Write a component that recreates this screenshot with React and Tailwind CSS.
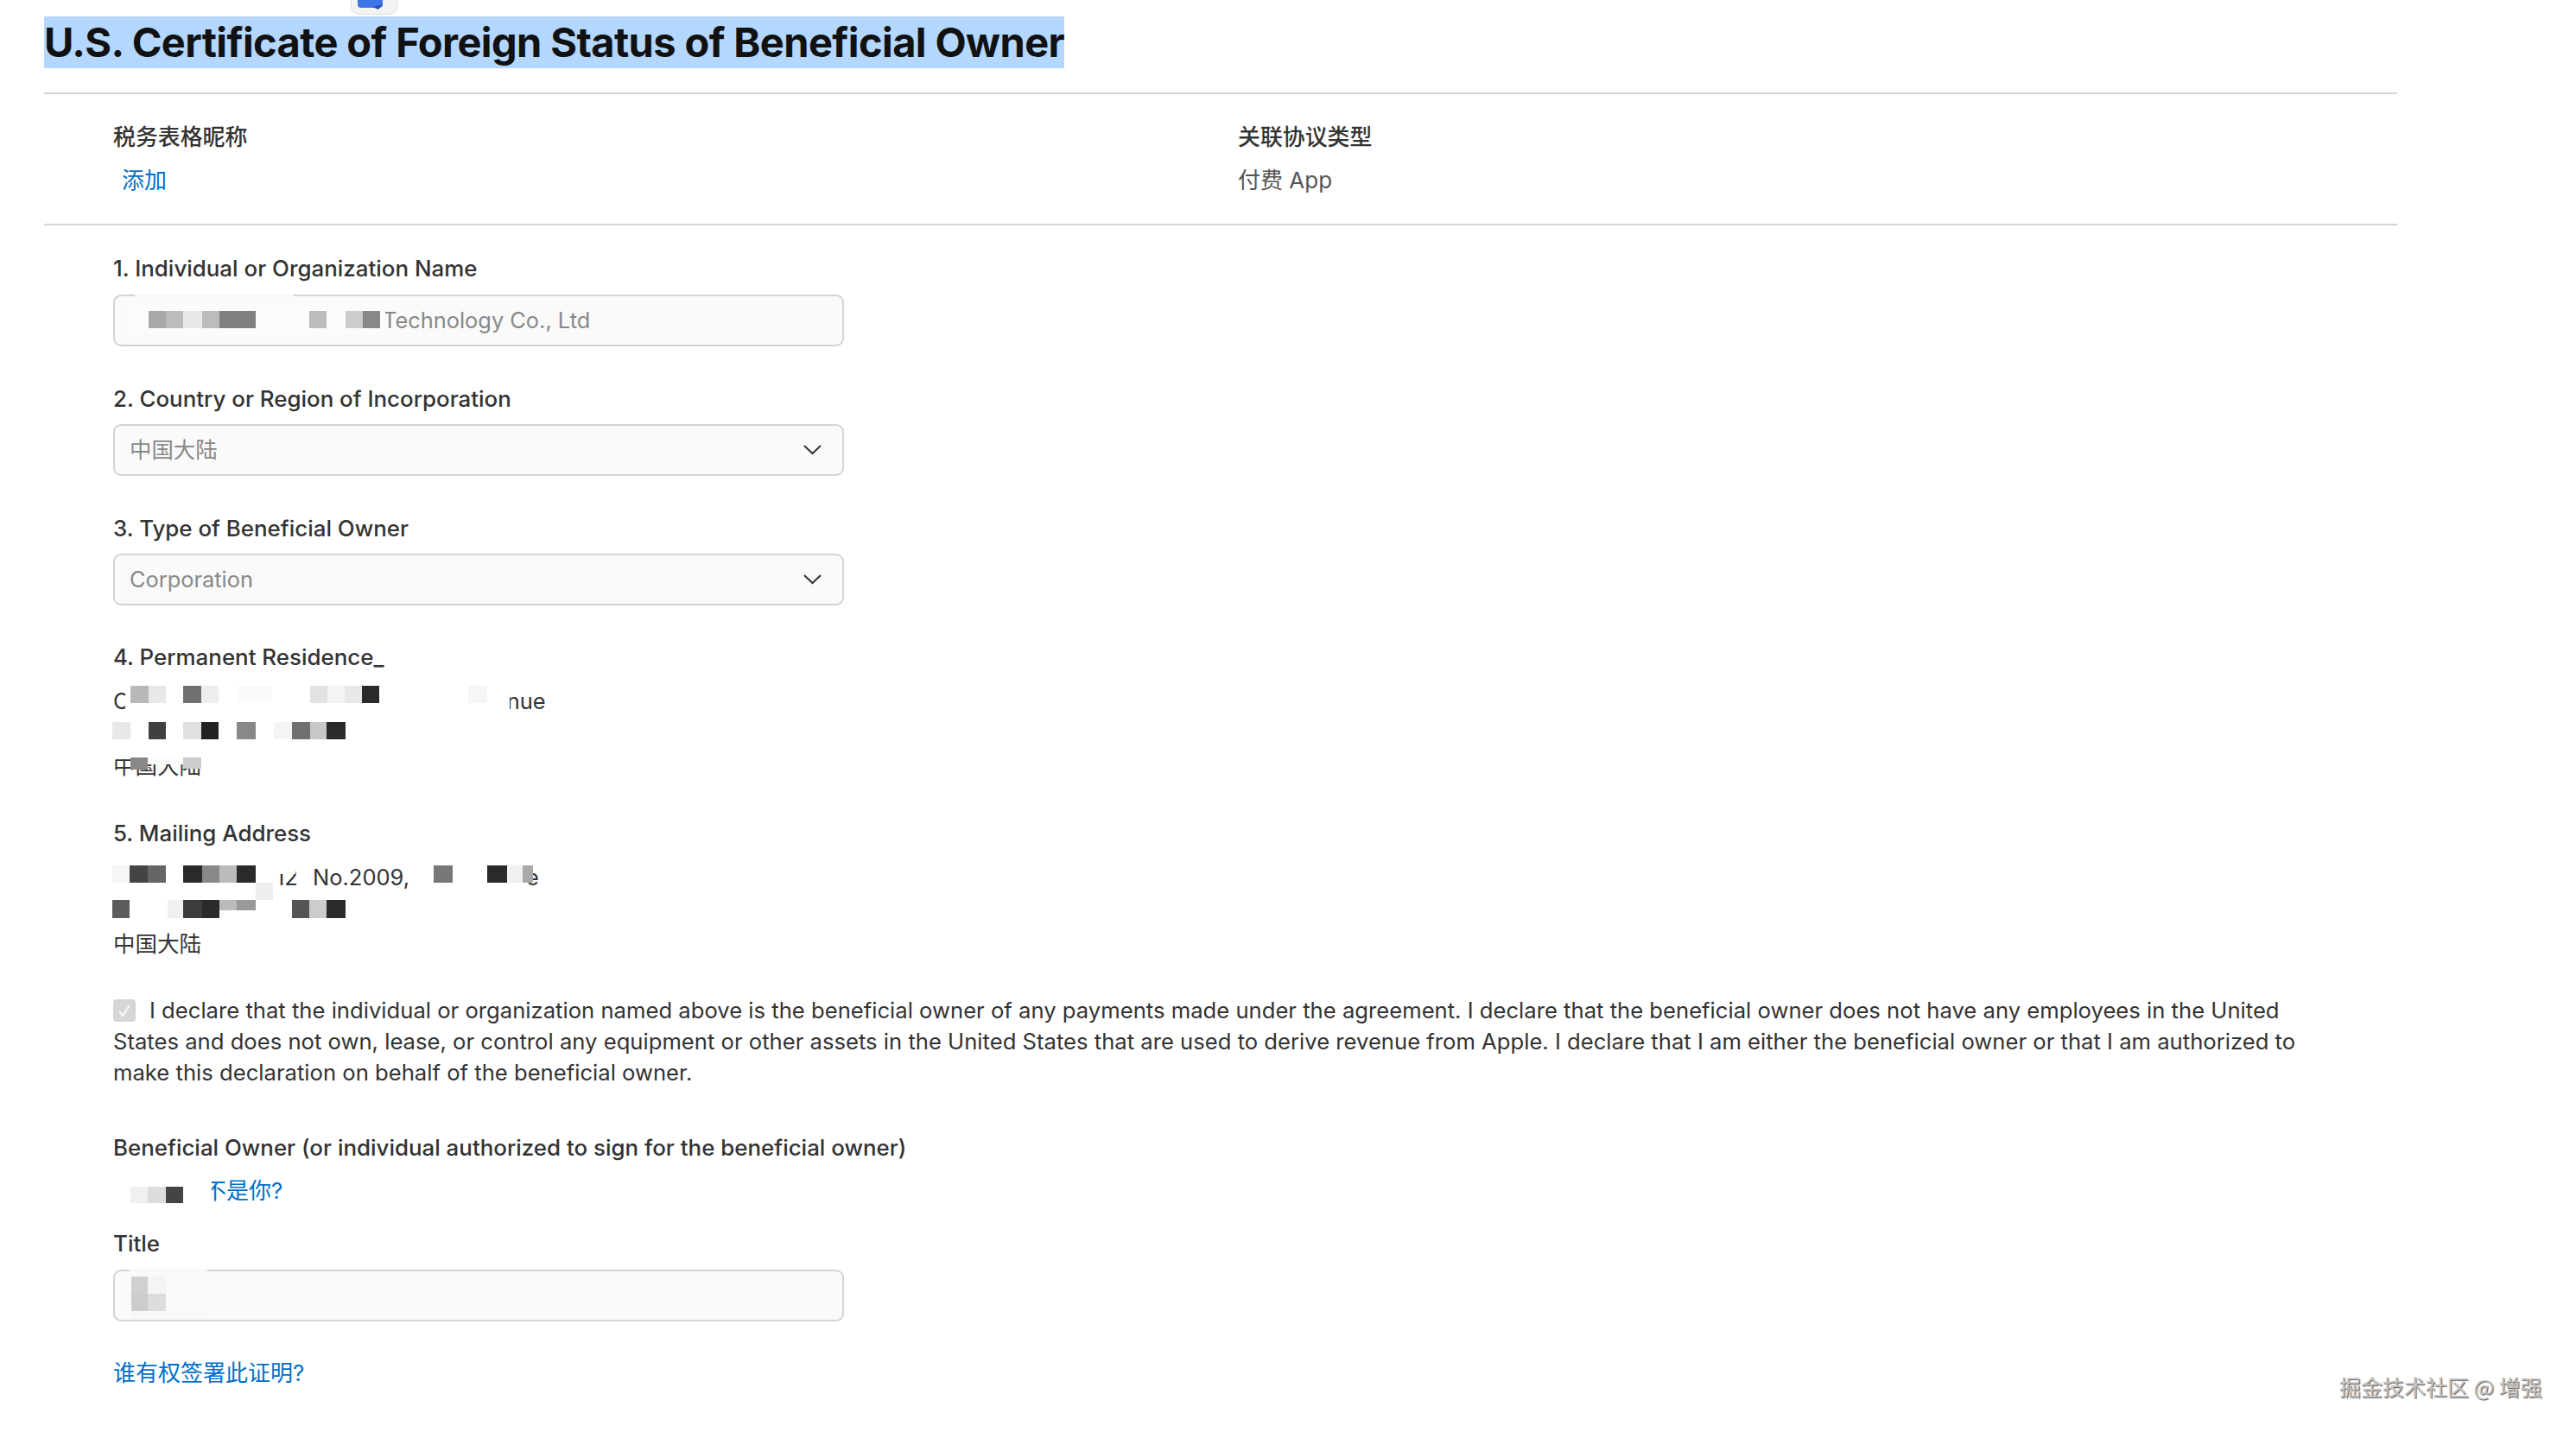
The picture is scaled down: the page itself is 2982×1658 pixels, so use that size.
const cells = [
  // white masks
  [150, 352, 296, 36, '#fbfbfb'],
  [156, 341, 184, 3, '#f8f8f8'],
  [145, 786, 445, 36, '#ffffff'],
  [131, 830, 290, 32, '#ffffff'],
  [131, 864, 104, 15, '#ffffff'],
  [131, 1000, 180, 24, '#ffffff'],
  [316, 1002, 26, 10, '#ffffff'],
  [131, 1040, 270, 14, '#ffffff'],
  [131, 1054, 125, 12, '#ffffff'],
  [131, 1366, 114, 32, '#ffffff'],
  [150, 1469, 90, 3, '#f8f8f8'],
  [151, 1518, 90, 10, '#f8f8f8'],
  // input 1
  [172, 360, 20, 20, '#a8a8a8'], [192, 360, 20, 20, '#bcbcbc'], [212, 360, 22, 20, '#e8e8e8'], [234, 360, 20, 20, '#bcbcbc'], [254, 360, 42, 20, '#808080'],
  [358, 360, 20, 20, '#bcbcbc'], [400, 360, 20, 20, '#cccccc'], [420, 360, 20, 20, '#888888'],
  // permanent row 1
  [151, 794, 21, 20, '#b8b8b8'], [172, 794, 20, 20, '#e8e8e8'], [212, 794, 21, 20, '#707070'], [233, 794, 20, 20, '#eeeeee'], [276, 794, 39, 20, '#fafafa'],
  [359, 794, 20, 20, '#e2e2e2'], [379, 794, 20, 20, '#f4f4f4'], [399, 794, 20, 20, '#e8e8e8'], [419, 794, 20, 20, '#2a2a2a'], [542, 794, 22, 20, '#f6f6f6'],
  // permanent row 2
  [130, 836, 21, 20, '#e8e8e8'], [172, 836, 20, 20, '#404040'], [212, 836, 21, 20, '#e0e0e0'], [233, 836, 20, 20, '#222222'], [274, 836, 22, 20, '#888888'],
  [317, 836, 21, 20, '#f4f4f4'], [338, 836, 21, 20, '#707070'], [359, 836, 19, 20, '#c8c8c8'], [378, 836, 22, 20, '#2a2a2a'],
  // permanent row 3
  [151, 877, 20, 14, '#888888'], [171, 877, 41, 8, '#fafafa'], [212, 877, 21, 13, '#cccccc'],
  // mailing row 1
  [130, 1002, 20, 20, '#f6f6f6'], [150, 1002, 21, 20, '#444444'], [171, 1002, 21, 20, '#666666'], [212, 1002, 22, 20, '#2a2a2a'], [234, 1002, 20, 20, '#888888'], [254, 1002, 20, 20, '#bbbbbb'], [274, 1002, 22, 20, '#2a2a2a'],
  [296, 1022, 20, 20, '#eeeeee'],
  [502, 1002, 22, 20, '#777777'], [564, 1002, 23, 20, '#2a2a2a'], [587, 1002, 18, 20, '#f0f0f0'], [605, 1002, 12, 20, '#aaaaaa'],
  // mailing row 2
  [130, 1042, 20, 21, '#5c5c5c'], [194, 1042, 18, 21, '#f0f0f0'], [212, 1042, 22, 21, '#3c3c3c'], [234, 1042, 20, 21, '#2a2a2a'], [254, 1042, 20, 12, '#bbbbbb'], [274, 1042, 22, 12, '#999999'],
  [338, 1042, 20, 21, '#555555'], [358, 1042, 20, 21, '#cccccc'], [378, 1042, 22, 21, '#2a2a2a'],
  // owner
  [151, 1374, 20, 19, '#f0f0f0'], [171, 1374, 21, 19, '#dddddd'], [192, 1374, 20, 19, '#444444'],
  // title input
  [152, 1478, 19, 20, '#d0d0d0'], [171, 1478, 21, 20, '#f4f4f4'], [152, 1498, 19, 20, '#cccccc'], [171, 1498, 21, 20, '#dddddd'],
];

function Chevron() {
  return (
    <svg width="23" height="13" viewBox="0 0 23 13" fill="none" className="absolute right-[23px] top-[21px]">
      <path d="M2 2l9.5 9L21 2" stroke="#333" strokeWidth="2" />
    </svg>
  );
}

function Label({ children, className = '' }) {
  return <div className={`h-[36px] text-[25.9px] font-medium leading-[36px] text-[#333333] ${className}`}>{children}</div>;
}

function Field({ children, chevron, className = '' }) {
  return (
    <div className={`relative h-[60px] w-[846px] rounded-[9px] border-2 border-[#d4d4d4] bg-[#fafafa] text-[25.4px] leading-[56px] text-[#888888] ${className}`}>
      {children}
      {chevron && <Chevron />}
    </div>
  );
}

export default function App() {
  return (
    <div className="relative h-[1658px] w-[2982px] overflow-hidden bg-white pl-[51px] pt-[19px] text-[26px] [font-family:Inter,'Noto_Sans_CJK_SC',sans-serif]">
      {/* dragged app icon peeking in from above */}
      <div className="absolute left-[406px] top-0 h-[17px] w-[54px] rounded-b-[10px] border border-t-0 border-[#dddddd] bg-[#f3f3f3]">
        <svg width="54" height="17" viewBox="0 0 54 17" className="absolute left-0 top-0">
          <path d="M7 0H36V5Q36 9 32 9H11Q7 9 7 5Z" fill="#3f74e6" />
          <path d="M24 8L36 5L31 11Z" fill="#2b4fb8" />
        </svg>
      </div>

      <h1 className="inline-block h-[60px] bg-[#b3d7ff] text-[47px] font-bold leading-[60px] tracking-[-0.6px] text-[#111111]">
        U.S. Certificate of Foreign Status of Beneficial Owner
      </h1>

      <div className="mt-[28px] h-[2px] w-[2724px] bg-[#d4d4d4]" />

      <div className="ml-[80px] mt-[32px] flex">
        <div className="w-[1302px]">
          <Label>税务表格昵称</Label>
          <div className="mt-[14px] pl-[10px] leading-[36px] text-[#0070c9]">添加</div>
        </div>
        <div>
          <Label>关联协议类型</Label>
          <div className="mt-[14px] leading-[36px] text-[#555555]">付费 App</div>
        </div>
      </div>

      <div className="mt-[32px] h-[2px] w-[2724px] bg-[#d4d4d4]" />

      <div className="ml-[80px]">
        <Label className="mt-[32px]">1. Individual or Organization Name</Label>
        <Field className="mt-[12px] pl-[310px]">Technology Co., Ltd</Field>

        <Label className="mt-[43px]">2. Country or Region of Incorporation</Label>
        <Field chevron className="mt-[11px] pl-[17px]">中国大陆</Field>

        <Label className="mt-[43px]">3. Type of Beneficial Owner</Label>
        <Field chevron className="mt-[11px] pl-[17px]">Corporation</Field>

        <Label className="mt-[42px]">4. Permanent Residence_</Label>
        <div className="mt-[13px] text-[25.5px] leading-[39px] text-[#333333]">
          <div className="flex h-[39px]"><span>C</span><span className="ml-[437px]">nue</span></div>
          <div className="h-[36px]" />
          <div className="h-[39px]">中国大陆</div>
        </div>

        <Label className="mt-[41px]">5. Mailing Address</Label>
        <div className="mt-[13px] text-[25.5px] leading-[39px] text-[#333333]">
          <div className="h-[39px] pl-[188px]">
            <span className="inline-block w-[43px]">12</span>No.2009,<span className="ml-[135px]">e</span>
          </div>
          <div className="h-[38px]" />
          <div className="h-[39px]">中国大陆</div>
        </div>

        <p className="mt-[40px] w-[2560px] text-[25.65px] leading-[36px] text-[#333333]">
          <span className="mr-[16px] inline-flex h-[26px] w-[26px] translate-y-[-2px] items-center justify-center rounded-[4px] bg-[#d6d6d6] align-middle">
            <svg width="18" height="18" viewBox="0 0 18 18" fill="none">
              <path d="M3 10l4 5 8-12" stroke="#f4f4f4" strokeWidth="2.6" />
            </svg>
          </span>
          I declare that the individual or organization named above is the beneficial owner of any payments made under the agreement. I declare that the beneficial owner does not have any employees in the United States and does not own, lease, or control any equipment or other assets in the United States that are used to derive revenue from Apple. I declare that I am either the beneficial owner or that I am authorized to make this declaration on behalf of the beneficial owner.
        </p>

        <Label className="mt-[51px]">Beneficial Owner (or individual authorized to sign for the beneficial owner)</Label>
        <div className="mt-[14px] h-[36px] pl-[105px] leading-[36px] text-[#0070c9]">不是你?</div>

        <Label className="mt-[25px]">Title</Label>
        <Field className="mt-[12px]" />

        <div className="mt-[42px] leading-[36px] text-[#0070c9]">谁有权签署此证明?</div>
      </div>

      {/* pixelated redaction over the personal details */}
      <div className="pointer-events-none absolute inset-0">
        {cells.map(([left, top, width, height, background], i) => (
          <div key={i} className="absolute" style={{ left, top, width, height, background }} />
        ))}
      </div>

      <div className="absolute left-[2708px] top-[1587px] whitespace-nowrap text-[25px] leading-[36px] text-[#c4c4c4] [text-shadow:1px_1px_1px_#555555] [font-family:'Noto_Sans_CJK_SC',sans-serif]">
        掘金技术社区 @ 增强
      </div>
    </div>
  );
}
